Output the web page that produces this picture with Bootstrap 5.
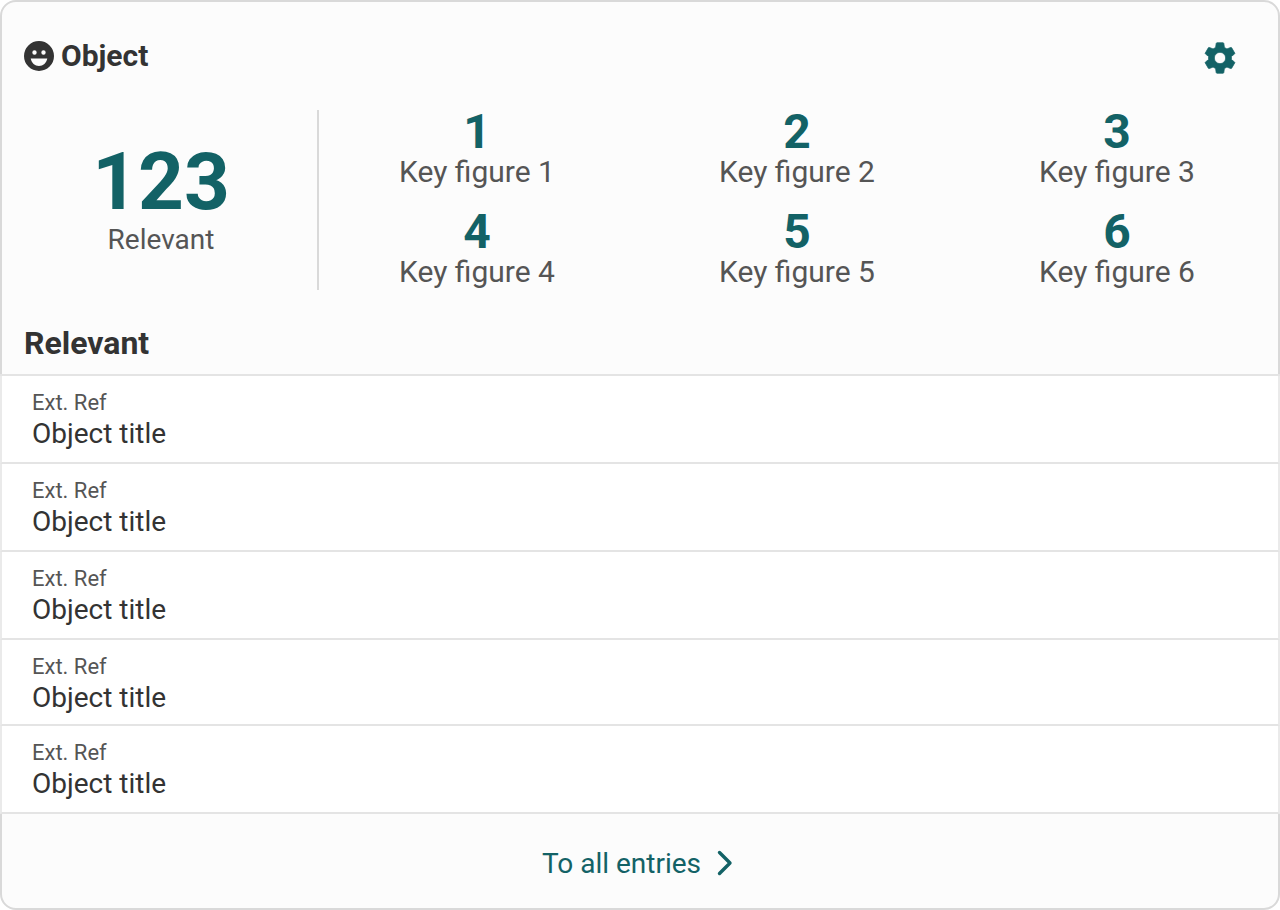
<!DOCTYPE html>
<html lang="en"><head><meta charset="utf-8"><title>Object</title>
<link href="https://cdn.jsdelivr.net/npm/bootstrap@5.3.0/dist/css/bootstrap.min.css" rel="stylesheet">
<style>
html,body{height:910px;overflow:hidden;background:#fff;font-family:Roboto,"Liberation Sans",sans-serif}
.widget{height:910px;border:2px solid #d9d9d9;border-radius:16px;background:#fcfcfc;color:#333}
.w-head{height:108px;padding:22px 39px 0 22px}
.w-title{font-size:30px;font-weight:700;line-height:64px;gap:7px;color:#333}
.gear-ic{margin-top:15px;stroke:#136266;stroke-width:.5px;stroke-linejoin:round}
.stats{height:180px}
.main-stat{flex:none;width:317px;border-right:2px solid #d9d9d9;text-align:center;padding-left:3px}
.main-num{font-size:80px;font-weight:700;line-height:80px;color:#136266}
.main-lbl{font-size:28px;line-height:36px;color:#555}
.kf-grid{flex:1;display:grid;grid-template-columns:repeat(3,320px);grid-auto-rows:100px;margin:-2px 0 0 -2px}
.kf{text-align:center;color:#555;font-size:30px;line-height:36px}
.kf b{display:block;font-size:48px;line-height:48px;height:46px;font-weight:700;color:#136266}
.sec-title{height:86px;margin:0 -2px;padding:0 24px;font-size:32px;font-weight:700;line-height:106px;color:#333;border-bottom:2px solid #e4e4e4}
.rowitem{background:#fff;margin:0 -2px;border:solid #eaeaea;border-width:0 2px;border-bottom:2px solid #e4e4e4;height:88px;padding:14px 30px 0}
.rowitem:nth-child(4){height:86px}
.rowitem small{display:block;font-size:22px;line-height:26px;color:#555}
.rowitem span{display:block;font-size:28px;line-height:36px;color:#333}
.w-foot{height:94px;padding:6px 5px 0 0;gap:16px;color:#136266;font-size:28px;text-decoration:none}
.chev-ic{margin-top:-3px}
</style></head><body>
<div class="widget d-flex flex-column">
<div class="w-head d-flex justify-content-between align-items-start">
<div class="w-title d-flex align-items-center">
<svg width="30" height="30" viewBox="0 0 30 30" aria-hidden="true"><path fill="#333" fill-rule="evenodd" d="M15 0a15 15 0 1 0 0 30 15 15 0 0 0 0-30zM10.500 9.300a2.200 2.200 0 1 1 0 4.400 2.200 2.200 0 0 1 0-4.400zm9 0a2.200 2.200 0 1 1 0 4.400 2.200 2.200 0 0 1 0-4.400zM6.700 17.500h16.600c-.8 4.400-4.200 7.500-8.300 7.500s-7.500-3.100-8.300-7.500z"/></svg>
<span>Object</span></div>
<svg class="gear-ic" width="38" height="38" viewBox="0 0 24 24" aria-hidden="true"><path fill="#136266" d="M19.140 12.940c.04-.3.06-.61.06-.94 0-.32-.02-.64-.07-.94l2.030-1.580c.18-.14.23-.41.12-.61l-1.920-3.320c-.12-.22-.37-.29-.59-.22l-2.390.96c-.5-.38-1.030-.7-1.620-.94l-.36-2.540c-.04-.24-.24-.41-.48-.41h-3.840c-.24 0-.43.17-.47.41l-.36 2.540c-.59.24-1.130.57-1.620.94l-2.390-.96c-.22-.08-.47 0-.59.22L2.740 8.870c-.12.21-.08.47.12.61l2.030 1.580c-.05.3-.09.63-.09.94s.02.64.07.94l-2.030 1.580c-.18.14-.23.41-.12.61l1.920 3.320c.12.22.37.29.59.22l2.390-.96c.5.38 1.030.7 1.620.94l.36 2.540c.05.24.24.41.48.41h3.840c.24 0 .44-.17.47-.41l.36-2.540c.59-.24 1.130-.56 1.620-.94l2.390.96c.22.08.47 0 .59-.22l1.920-3.320c.12-.22.07-.47-.12-.61l-2.010-1.580zM12 15.600c-1.980 0-3.600-1.620-3.600-3.600s1.620-3.600 3.600-3.600 3.600 1.620 3.600 3.600-1.620 3.600-3.600 3.600z"/></svg>
</div>
<div class="stats d-flex">
<div class="main-stat d-flex flex-column justify-content-center"><div class="main-num">123</div><div class="main-lbl">Relevant</div></div>
<div class="kf-grid">
<div class="kf"><b>1</b>Key figure 1</div><div class="kf"><b>2</b>Key figure 2</div><div class="kf"><b>3</b>Key figure 3</div>
<div class="kf"><b>4</b>Key figure 4</div><div class="kf"><b>5</b>Key figure 5</div><div class="kf"><b>6</b>Key figure 6</div>
</div></div>
<h2 class="sec-title">Relevant</h2>
<div>
<div class="rowitem"><small>Ext. Ref</small><span>Object title</span></div>
<div class="rowitem"><small>Ext. Ref</small><span>Object title</span></div>
<div class="rowitem"><small>Ext. Ref</small><span>Object title</span></div>
<div class="rowitem"><small>Ext. Ref</small><span>Object title</span></div>
<div class="rowitem"><small>Ext. Ref</small><span>Object title</span></div>
</div>
<a href="#" class="w-foot d-flex align-items-center justify-content-center">To all entries
<svg class="chev-ic" width="16" height="26" viewBox="0 0 16 26" aria-hidden="true"><path d="M2.500 2.500L13 13 2.500 23.500" fill="none" stroke="#136266" stroke-width="3.400" stroke-linecap="round" stroke-linejoin="round"/></svg></a>
</div>
</body></html>
